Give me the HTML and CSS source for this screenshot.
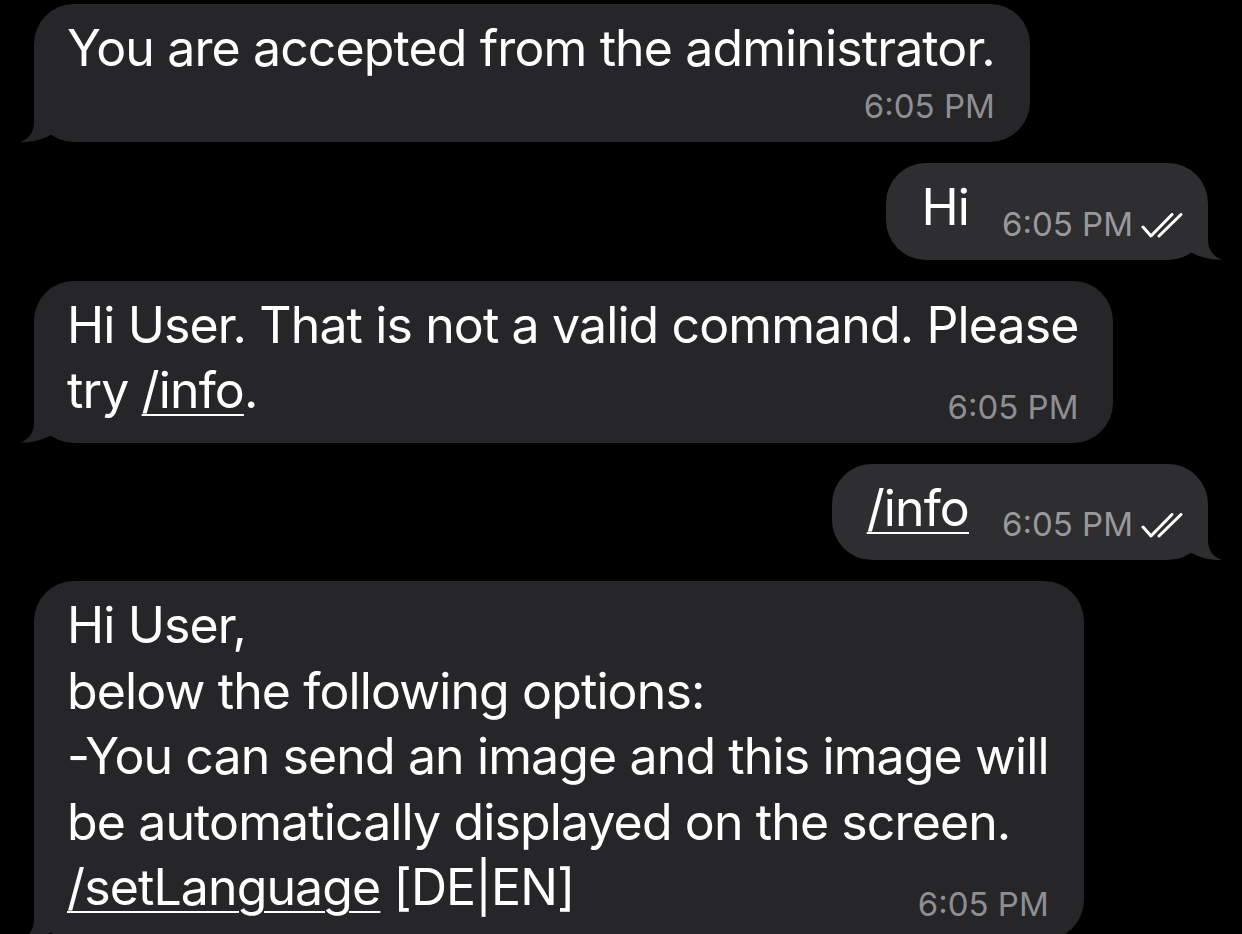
FILE: index.html
```html
<!DOCTYPE html>
<html lang="en">
<head>
<meta charset="utf-8">
<title>Chat</title>
<link rel="stylesheet" href="styles.css">
</head>
<body>
<div class="chat">
  <div class="msg in">
    <div class="bubble">
      <div class="line">You are accepted from the administrator.</div>
      <div class="meta-row"><span class="time">6:05 PM</span></div>
    </div>
  </div>

  <div class="msg out">
    <div class="bubble">
      <div class="last">
        <span class="line">Hi</span>
        <span class="meta"><span class="time">6:05 PM</span><svg class="check" viewBox="0 0 42 25" width="42" height="25"><path d="M2 14 L10 23 L31 1.5 M18 23 L40 1.5" /></svg></span>
      </div>
    </div>
  </div>

  <div class="msg in">
    <div class="bubble">
      <div class="line">Hi User. That is not a valid command. Please</div>
      <div class="last">
        <span class="line">try <span class="link">/info</span>.</span>
        <span class="meta"><span class="time">6:05 PM</span></span>
      </div>
    </div>
  </div>

  <div class="msg out">
    <div class="bubble">
      <div class="last">
        <span class="line"><span class="link">/info</span></span>
        <span class="meta"><span class="time">6:05 PM</span><svg class="check" viewBox="0 0 42 25" width="42" height="25"><path d="M2 14 L10 23 L31 1.5 M18 23 L40 1.5" /></svg></span>
      </div>
    </div>
  </div>

  <div class="msg in">
    <div class="bubble">
      <div class="line">Hi User,</div>
      <div class="line">below the following options:</div>
      <div class="line">-You can send an image and this image will</div>
      <div class="line">be automatically displayed on the screen.</div>
      <div class="last">
        <span class="line"><span class="link">/setLanguage</span> [DE|EN]</span>
        <span class="meta"><span class="time">6:05 PM</span></span>
      </div>
    </div>
  </div>
</div>
</body>
</html>
```

FILE: styles.css
```css
html, body {
  margin: 0;
  padding: 0;
  background: #000;
  height: 100%;
  overflow: hidden;
}

body {
  font-family: Inter, "Noto Sans", "Liberation Sans", sans-serif;
  color: #fff;
}

.chat {
  display: flex;
  flex-direction: column;
  gap: 21px;
  padding: 4px 34px 0 34px;
}

.msg {
  display: flex;
}

.msg.in {
  justify-content: flex-start;
}

.msg.out {
  justify-content: flex-end;
}

.bubble {
  position: relative;
  border-radius: 40px;
  padding: 12px 35px 19px 33px;
  background: #262628;
}

.msg.out .bubble {
  background: #2e2e30;
  padding: 12px 25px 19px 35px;
}

.bubble::before {
  content: "";
  position: absolute;
  bottom: 0;
  width: 40px;
  height: 50px;
  background: inherit;
}

.msg.in .bubble::before {
  left: -14px;
  clip-path: path('M14,8 L14,30 C14,40 9,47 0,50 C11,50.5 23,47.5 31,42.7 L31,8 Z');
}

.msg.out .bubble::before {
  right: -14px;
  clip-path: path('M26,8 L26,30 C26,40 31,47 40,50 C29,50.5 17,47.5 9,42.7 L9,8 Z');
}

.line {
  display: block;
  font-size: 50px;
  line-height: 65.5px;
  letter-spacing: -0.88px;
  white-space: nowrap;
}

.last {
  display: flex;
  align-items: flex-end;
}

.last .line {
  display: inline-block;
}

.meta {
  margin-left: auto;
  padding-left: 33px;
  display: flex;
  align-items: flex-end;
}

.meta-row {
  display: flex;
  justify-content: flex-end;
  margin-top: 8.5px;
}

.time {
  font-size: 33px;
  line-height: 33px;
  color: #8e8e93;
  letter-spacing: 0;
  white-space: nowrap;
}

.msg.out .time {
  color: #98989d;
}

.check {
  margin-left: 8px;
  margin-bottom: 3px;
  fill: none;
  stroke: #fff;
  stroke-width: 3;
  stroke-linecap: round;
  stroke-linejoin: round;
}

.link {
  text-decoration: underline;
  text-decoration-thickness: 2px;
  text-underline-offset: 6px;
}
```
